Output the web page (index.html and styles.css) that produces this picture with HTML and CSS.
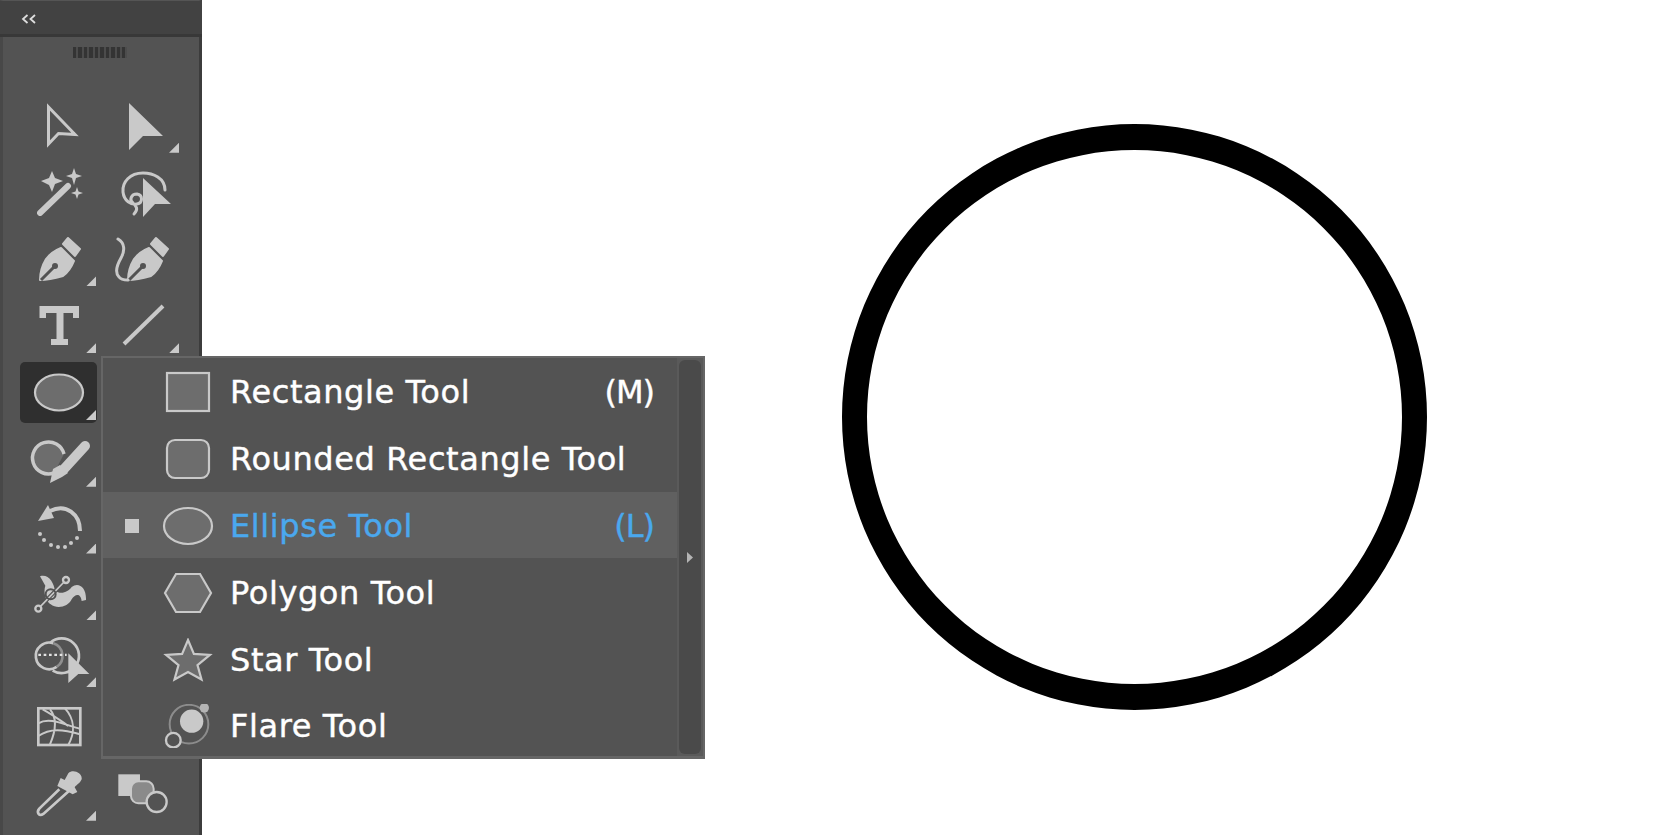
FILE: index.html
```html
<!DOCTYPE html>
<html lang="en">
<head>
<meta charset="utf-8">
<title>Ellipse Tool</title>
<link rel="stylesheet" href="styles.css">
</head>
<body>
<div class="app">
  <aside class="toolbar">
    <header class="toolbar-head">
      <svg class="collapse" viewBox="0 0 16 10"><path d="M6.5 1 L2 5 L6.5 9 M14 1 L9.500 5 L14 9"/></svg>
    </header>
    <div class="grip"></div>
    <div class="tools">
      <div class="tool"><svg viewBox="0 0 78 67"><path class="ol" d="M28.500 14 L55 41.500 L38.500 40.500 L28.500 51 Z"/></svg></div>
      <div class="tool more"><svg viewBox="0 0 78 67"><path class="sol" d="M26 10 L60 43 L40 43 L26 57 Z"/></svg></div>

      <div class="tool"><svg viewBox="0 0 78 67">
        <path class="ol round w6" d="M20 53 L48 26"/>
        <path class="sol" d="M32 11 L35 18 L43 21 L35 24 L32 32 L29 25 L21 21 L29 18 Z"/>
        <path class="sol" d="M54 8 L56 14 L62 16 L56 18 L54 25 L52 18 L46 16 L52 14 Z"/>
        <path class="sol" d="M57 27 L58.500 31.500 L63 33 L58.500 34.500 L57 39 L55.500 34.500 L51 33 L55.500 31.500 Z"/>
      </svg></div>
      <div class="tool"><svg viewBox="0 0 78 67">
        <path class="ol round" d="M62 30 C62 18 50 13 40 13 C27 13 19 22 20 32 C21 41 28 45 34 44 C40 43 40 35 34 34 C28 34 26 40 30 43 C33 46 36 49 31 54"/>
        <path class="sol" d="M40 18 L68 44 L52 44 L40 57 Z"/>
      </svg></div>

      <div class="tool more"><svg viewBox="0 0 78 67">
        <path class="sol soft" d="M20 53 C20 45 23 37 26 32 C30 27 36 23 41 21 L54 34 C52 39 49 45 43 49 C36 51 27 53 20 53 Z"/>
        <path class="cut" d="M21 53 L35 39"/><circle class="hole" cx="35" cy="39" r="3"/>
        <path class="sol soft" d="M48 11 L60 22 L55 29 L43 17 Z"/>
      </svg></div>
      <div class="tool"><svg viewBox="0 0 78 67">
        <g transform="translate(5 0)">
          <path class="sol soft" d="M20 53 C20 45 23 37 26 32 C30 27 36 23 41 21 L54 34 C52 39 49 45 43 49 C36 51 27 53 20 53 Z"/>
          <path class="cut" d="M21 53 L35 39"/><circle class="hole" cx="35" cy="39" r="3"/>
          <path class="sol soft" d="M48 11 L60 22 L55 29 L43 17 Z"/>
        </g>
        <path class="ol round" d="M15 12 C22 16 22 24 18 31 C14 38 12 46 16 50 C18 53 22 53 25 53"/>
      </svg></div>

      <div class="tool more"><svg viewBox="0 0 78 67">
        <path class="sol" d="M19.500 13 H59 V25 H53 V20 H43.500 V46 H48 V52 H31 V46 H36.500 V20 H26 V25 H19.500 Z"/>
      </svg></div>
      <div class="tool more"><svg viewBox="0 0 78 67"><path class="ol w4" d="M21 51 L60 13"/></svg></div>

      <div class="tool more selected"><svg viewBox="0 0 78 67"><ellipse class="shape" cx="39" cy="32.500" rx="24" ry="18"/></svg></div>
      <div class="tool"></div>

      <div class="tool more"><svg viewBox="0 0 78 67">
        <path class="shape heavy" d="M34 46 A16 16 0 1 1 44 27"/>
        <path class="ol round w10" d="M65 19 L44 42"/>
        <path class="sol" d="M40 38 L48 46 L42 50 L30 56 L33 42 Z"/>
      </svg></div>
      <div class="tool"></div>

      <div class="tool more"><svg viewBox="0 0 78 67">
        <path class="ol w4" d="M30 17 C46 9 60 20 60 37"/>
        <path class="sol" d="M28 11 L18 27 L34 24 Z"/>
        <g class="sol"><circle cx="20" cy="40" r="2"/><circle cx="24" cy="46" r="2"/><circle cx="31" cy="51" r="2"/><circle cx="38" cy="53" r="2"/><circle cx="45" cy="53" r="2"/><circle cx="51" cy="49" r="2"/><circle cx="57" cy="44" r="2"/></g>
      </svg></div>
      <div class="tool"></div>

      <div class="tool more"><svg viewBox="0 0 78 67"><g transform="translate(-20 -130) scale(.3333)">
        <path class="sol" d="M120 436 C145 428 162 455 165 480 C185 492 205 482 215 468 C235 452 260 468 258 507 L245 510 C242 485 225 488 215 505 C205 527 172 536 152 520 C135 508 130 482 136 464 Z"/>
        <path class="wire" d="M115 533 L198 447"/>
        <path class="wire-in" d="M115 533 L198 447"/>
        <circle class="ring" cx="152" cy="490" r="15"/>
        <circle class="knob" cx="115" cy="533" r="9"/>
        <circle class="knob" cx="198" cy="447" r="9"/>
      </g></svg></div>
      <div class="tool"></div>

      <div class="tool more"><svg viewBox="0 0 78 67"><g transform="translate(-20 -1.400) scale(.3333)">
        <path class="z-ol" d="M150 52 A52 52 0 1 1 158 135"/>
        <path class="z-ol" d="M170 124 A40 40 0 1 1 160 53"/>
        <path class="z-ol z-dim" d="M160 53 A40 40 0 0 1 170 124"/>
        <path class="z-dots" d="M115 88 H200"/>
        <path class="sol" d="M205 83 L268 145 L235 145 L205 172 Z"/>
      </g></svg></div>
      <div class="tool"></div>

      <div class="tool"><svg viewBox="0 0 78 67"><g transform="translate(-20 -68) scale(.3333)">
        <rect class="z-ol" x="115" y="247" width="126" height="110"/>
        <path class="z-mesh" d="M115 292 C150 270 200 300 240 308 M115 330 C150 305 190 310 240 325 M150 250 C175 280 165 320 150 355 M195 247 C225 280 225 320 205 357 M128 250 C165 270 190 290 205 300"/>
      </g></svg></div>
      <div class="tool"></div>

      <div class="tool more"><svg viewBox="0 0 78 67"><g transform="translate(-20 -135) scale(.3333)">
        <path class="z-ol" d="M178 490 L118 548 C108 560 118 572 130 564 L210 492"/>
        <path class="sol" d="M172 480 L182 456 L194 462 L205 442 C218 428 248 440 245 460 C240 472 232 474 224 484 L232 498 L218 505 Z"/>
      </g></svg></div>
      <div class="tool"><svg viewBox="0 0 78 67"><g transform="translate(-103 -135) scale(.3333)">
        <rect x="355" y="445" width="65" height="65" class="z-light"/>
        <rect x="393" y="466" width="68" height="66" rx="22" class="z-mid"/>
        <circle cx="470" cy="528" r="30" class="z-ring"/>
      </g></svg></div>
    </div>
  </aside>

  <main class="canvas">
    <div class="circle"></div>
  </main>

  <div class="flyout">
    <ul class="menu">
      <li class="item">
        <span class="bullet"></span>
        <svg class="item-icon" viewBox="0 0 56 44"><rect class="shape" x="7" y="3" width="42" height="38"/></svg>
        <span class="label">Rectangle Tool</span><span class="key">(M)</span>
      </li>
      <li class="item">
        <span class="bullet"></span>
        <svg class="item-icon" viewBox="0 0 56 44"><rect class="shape" x="7" y="3" width="42" height="38" rx="8"/></svg>
        <span class="label">Rounded Rectangle Tool</span>
      </li>
      <li class="item active">
        <span class="bullet"><i class="dot"></i></span>
        <svg class="item-icon" viewBox="0 0 56 44"><ellipse class="shape" cx="28" cy="22" rx="24" ry="18"/></svg>
        <span class="label">Ellipse Tool</span><span class="key">(L)</span>
      </li>
      <li class="item">
        <span class="bullet"></span>
        <svg class="item-icon" viewBox="0 0 56 44"><path class="shape" d="M5 22 L16 3 L40 3 L51 22 L40 41 L16 41 Z"/></svg>
        <span class="label">Polygon Tool</span>
      </li>
      <li class="item">
        <span class="bullet"></span>
        <svg class="item-icon" viewBox="0 0 56 44"><path class="shape" d="M28 2 L33.900 15.900 L49.900 16.900 L37.500 27.100 L41.500 41.500 L28 34 L14.500 41.500 L18.500 27.100 L6.100 16.900 L22.100 15.900 Z"/></svg>
        <span class="label">Star Tool</span>
      </li>
      <li class="item">
        <span class="bullet"></span>
        <svg class="item-icon" viewBox="0 0 56 44"><g transform="translate(-65 -143.800) scale(.3333)">
          <circle class="z-orbit" cx="282" cy="492" r="58"/>
          <circle class="sol" cx="290" cy="483" r="35"/>
          <circle class="z-moon" cx="328" cy="443" r="14"/>
          <circle class="z-ring" cx="235" cy="540" r="22"/>
        </g></svg>
        <span class="label">Flare Tool</span>
      </li>
    </ul>
    <div class="tearoff"><svg class="tear-arrow" viewBox="0 0 6 11"><path d="M0 0 L6 5.500 L0 11 Z"/></svg></div>
  </div>
</div>
</body>
</html>
```
FILE: styles.css
```css
* { box-sizing: border-box; }
html, body { margin: 0; padding: 0; background: #fff; }
body { font-family: "DejaVu Sans", "Open Sans", sans-serif; overflow: hidden; }

.app { display: flex; position: relative; width: 1668px; height: 835px; }

.toolbar {
  width: 202px;
  flex: none;
  background: #535353;
  border-left: 3px solid #484848;
  border-right: 3px solid #3c3c3c;
  border-top: 1px solid #555;
}
.toolbar-head {
  height: 36px;
  margin-left: -3px;
  margin-right: -3px;
  background: #424242;
  border-bottom: 3px solid #383838;
  padding: 13px 0 0 21px;
}
.collapse { display: block; width: 16px; height: 10px; }
.collapse path { fill: none; stroke: #ddd; stroke-width: 1.800; }

.grip {
  width: 54px;
  height: 11px;
  margin: 10px 0 35px 70px;
  background: repeating-linear-gradient(90deg, #343434 0 3.400px, #4c4c4c 3.400px 5.450px);
}

.tools {
  display: grid;
  grid-template-columns: 78px 78px;
  grid-auto-rows: 66.800px;
  column-gap: 5px;
  padding-left: 17px;
}
.tool { position: relative; }
.tool svg { display: block; width: 78px; height: 67px; position: relative; filter: blur(.35px); }
.tool.more::after {
  content: "";
  position: absolute;
  right: 2px;
  bottom: 7px;
  width: 10px;
  height: 10px;
  background: #c9c9c9;
  clip-path: polygon(100% 0, 100% 100%, 0 100%);
}
.tool.selected::before {
  content: "";
  position: absolute;
  left: 0;
  right: 1px;
  top: 2px;
  bottom: 4px;
  background: #2f2f2f;
  border-radius: 5px;
}

.sol { fill: #c9c9c9; stroke: none; }
.soft { stroke: #c9c9c9; stroke-width: 2; stroke-linejoin: round; }
.ol { fill: none; stroke: #c9c9c9; stroke-width: 3; }
.w4 { stroke-width: 4; }
.w6 { stroke-width: 6; }
.w10 { stroke-width: 10; }
.round { stroke-linecap: round; }
.shape { fill: #6d6d6d; stroke: #c9c9c9; stroke-width: 2.200; }
.heavy { stroke-width: 3.500; }
.cut { stroke: #535353; stroke-width: 3; fill: none; }
.hole { fill: #535353; }
.wire { stroke: #535353; stroke-width: 12; fill: none; }
.wire-in { stroke: #c9c9c9; stroke-width: 5; fill: none; }
.ring { fill: none; stroke: #535353; stroke-width: 6; }
.knob { fill: #535353; stroke: #c9c9c9; stroke-width: 7; }
.z-ol { fill: none; stroke: #c9c9c9; stroke-width: 8; }
.z-dim { stroke: #8f8f8f; }
.z-dots { fill: none; stroke: #e2e2e2; stroke-width: 7; stroke-dasharray: 8 8; }
.z-mesh { fill: none; stroke: #c9c9c9; stroke-width: 6; }
.z-light { fill: #c9c9c9; }
.z-mid { fill: #8a8a8a; stroke: #c9c9c9; stroke-width: 6; }
.z-ring { fill: #535353; stroke: #c9c9c9; stroke-width: 7; }
.z-orbit { fill: none; stroke: #8c8c8c; stroke-width: 6; }
.z-moon { fill: #b4b4b4; }

.canvas { flex: 1; position: relative; }
.circle {
  position: absolute;
  left: 640px;
  top: 124px;
  width: 585px;
  height: 586px;
  border-style: solid;
  border-color: #000;
  border-width: 26px 25px;
  border-radius: 50%;
}

.flyout {
  position: absolute;
  left: 101px;
  top: 356px;
  width: 604px;
  height: 403px;
  display: flex;
  background: #5a5a5a;
  border: 2px solid #666;
  border-bottom-width: 3px;
}
.menu {
  list-style: none;
  margin: 0;
  padding: 0;
  width: 574px;
  flex: none;
  background: #535353;
  display: grid;
  grid-auto-rows: 66.800px;
}
.item {
  display: flex;
  align-items: center;
  padding-top: 2px;
  color: #fff;
  font-size: 32px;
  letter-spacing: .6px;
  -webkit-text-stroke: .4px currentColor;
}
.item.active { background: #606060; color: #4aa8ee; }
.bullet { width: 57px; flex: none; display: flex; justify-content: center; }
.dot { width: 14px; height: 14px; background: #c9c9c9; display: block; }
.item-icon { width: 56px; height: 44px; flex: none; display: block; margin-right: 14px; filter: blur(.35px); }
.label { flex: 1; white-space: nowrap; }
.key { margin-right: 23px; letter-spacing: -1px; }

.tearoff {
  flex: 1;
  margin: 2px;
  background: #4a4a4a;
  border-radius: 6px;
  display: flex;
  align-items: center;
  justify-content: center;
}
.tear-arrow { width: 6px; height: 11px; display: block; }
.tear-arrow path { fill: #b4b4b4; }
```
